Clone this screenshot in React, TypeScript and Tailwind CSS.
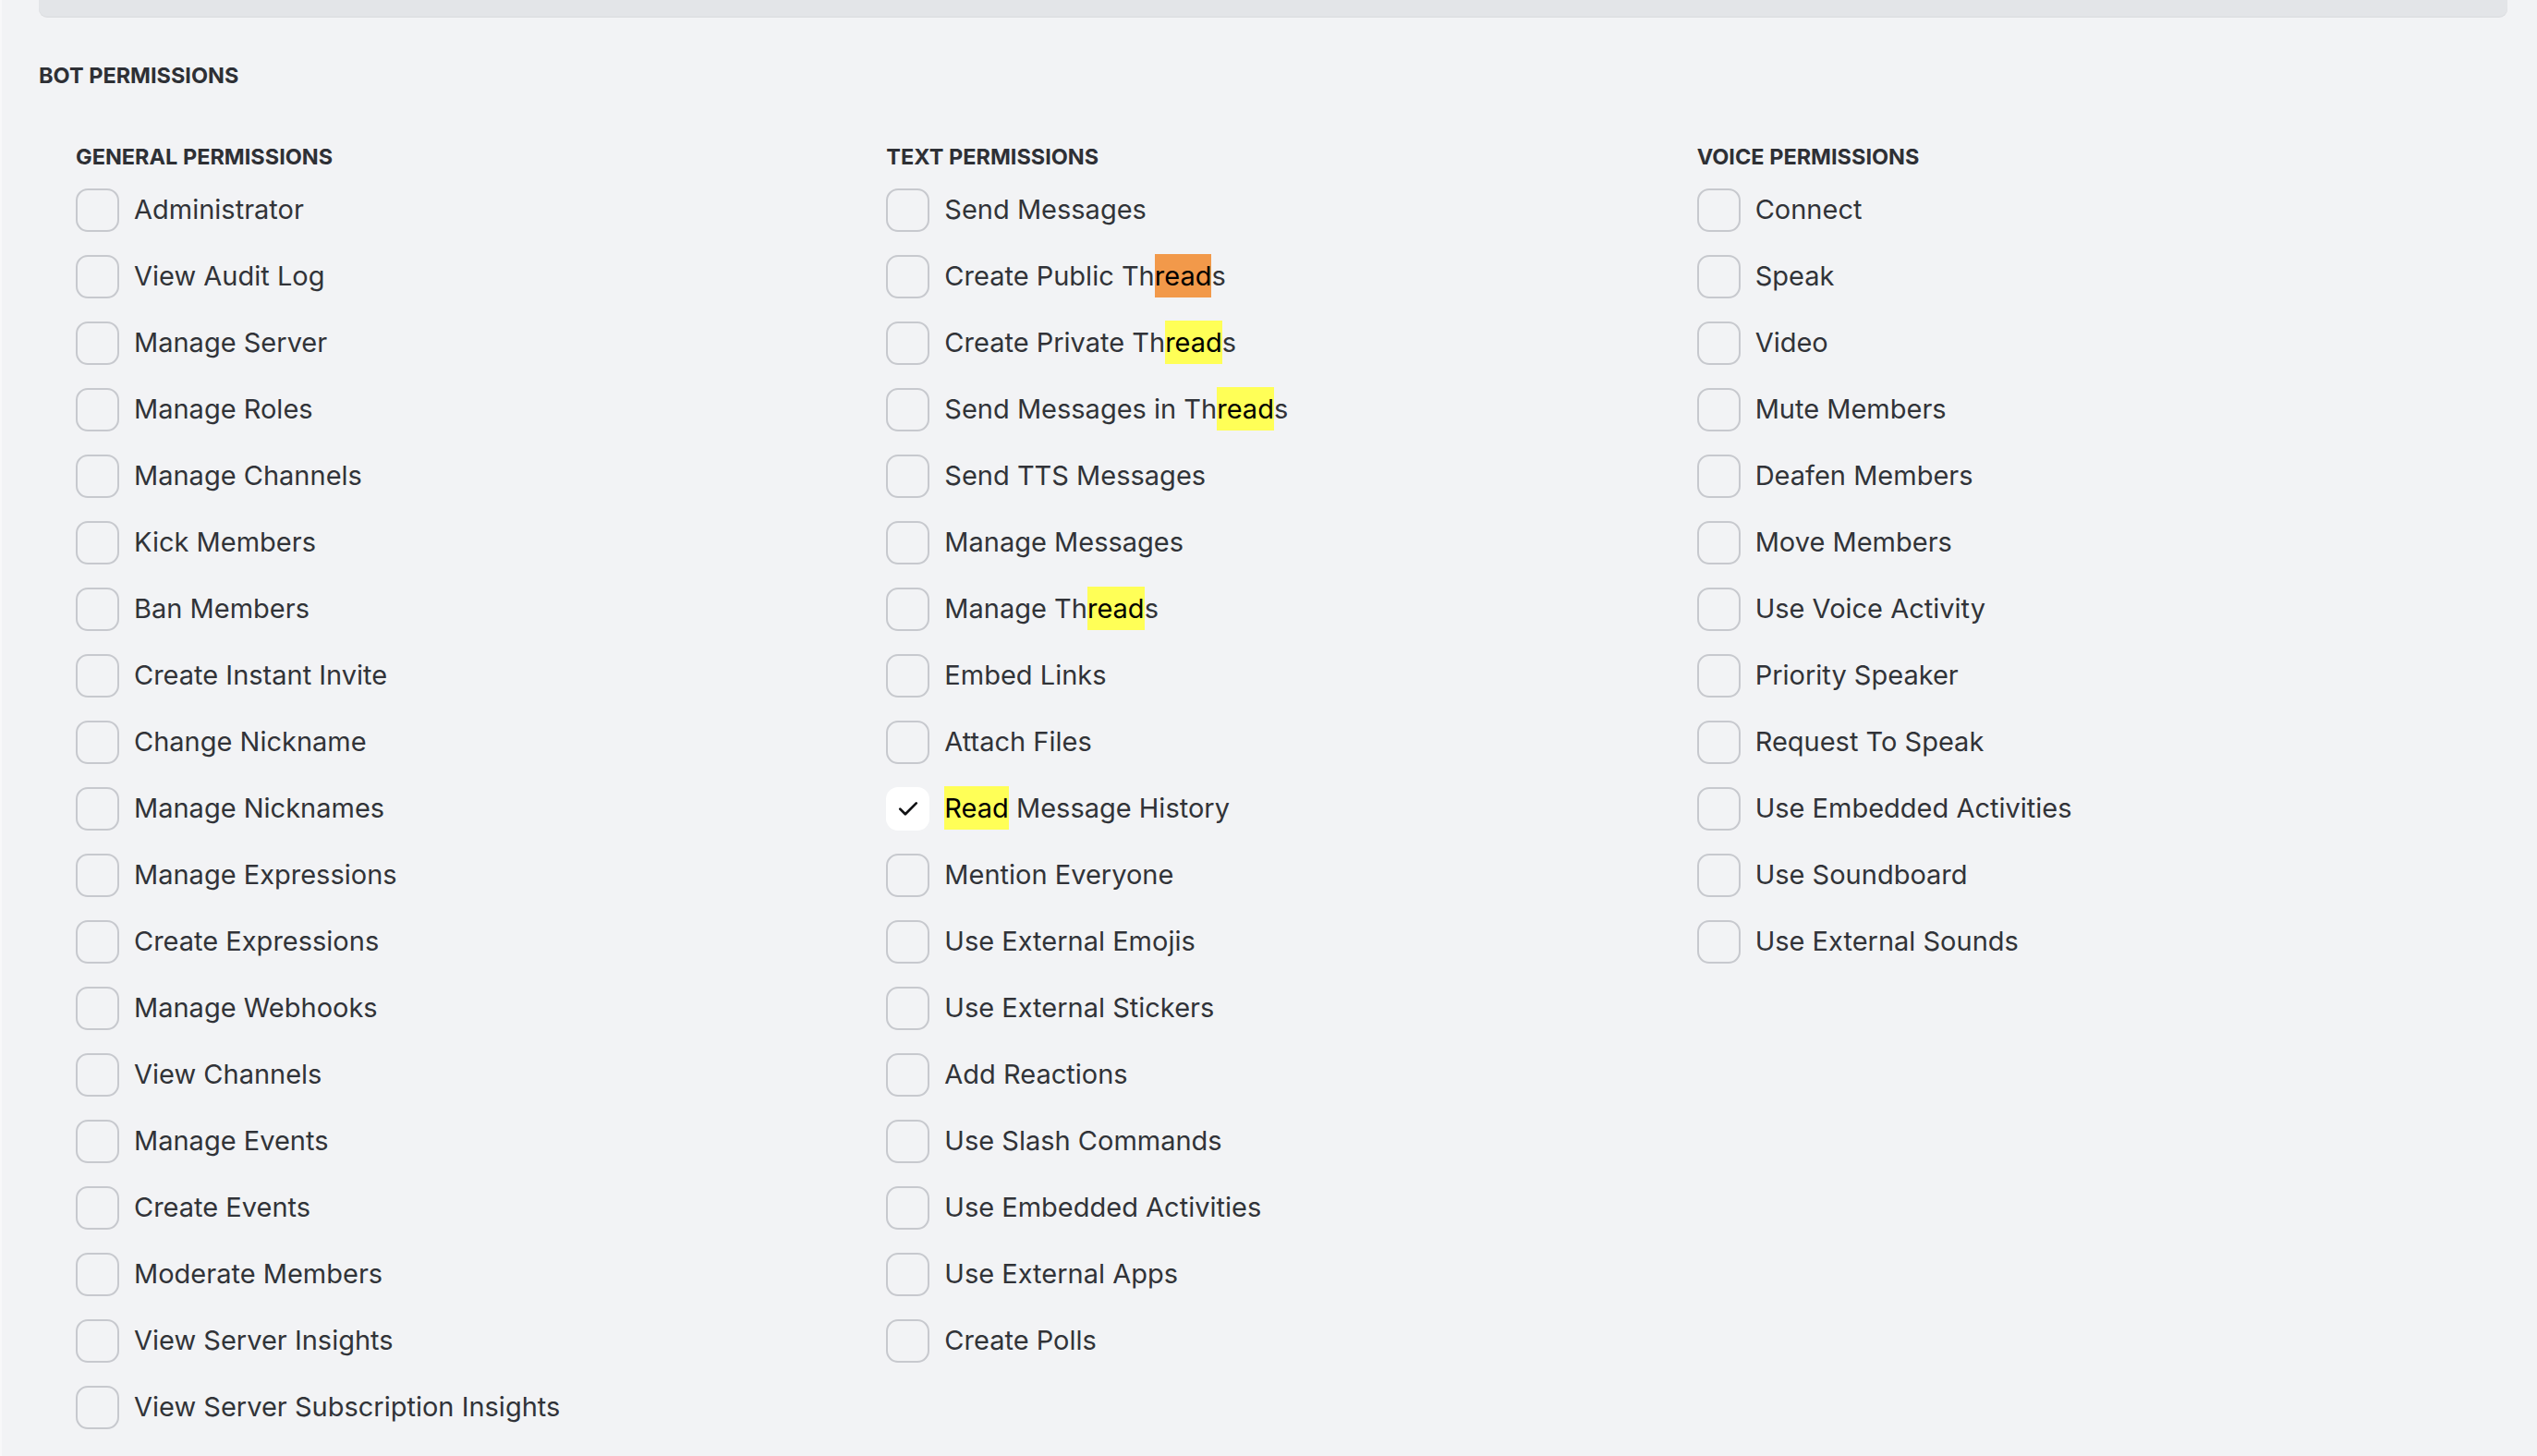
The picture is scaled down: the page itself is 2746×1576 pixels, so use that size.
import React from "react";

type Item = { label: React.ReactNode; checked?: boolean };

const HL = ({ children, active }: { children: React.ReactNode; active?: boolean }) => (
  <span className={active ? "bg-[#f2994a] text-black py-[6px]" : "bg-[#ffff57] text-black py-[6px]"}>{children}</span>
);

const general: Item[] = [
  "Administrator",
  "View Audit Log",
  "Manage Server",
  "Manage Roles",
  "Manage Channels",
  "Kick Members",
  "Ban Members",
  "Create Instant Invite",
  "Change Nickname",
  "Manage Nicknames",
  "Manage Expressions",
  "Create Expressions",
  "Manage Webhooks",
  "View Channels",
  "Manage Events",
  "Create Events",
  "Moderate Members",
  "View Server Insights",
  "View Server Subscription Insights",
].map((l) => ({ label: l }));

const text: Item[] = [
  { label: "Send Messages" },
  { label: <>Create Public Th<HL active>read</HL>s</> },
  { label: <>Create Private Th<HL>read</HL>s</> },
  { label: <>Send Messages in Th<HL>read</HL>s</> },
  { label: "Send TTS Messages" },
  { label: "Manage Messages" },
  { label: <>Manage Th<HL>read</HL>s</> },
  { label: "Embed Links" },
  { label: "Attach Files" },
  { label: <><HL>Read</HL> Message History</>, checked: true },
  { label: "Mention Everyone" },
  { label: "Use External Emojis" },
  { label: "Use External Stickers" },
  { label: "Add Reactions" },
  { label: "Use Slash Commands" },
  { label: "Use Embedded Activities" },
  { label: "Use External Apps" },
  { label: "Create Polls" },
];

const voice: Item[] = [
  "Connect",
  "Speak",
  "Video",
  "Mute Members",
  "Deafen Members",
  "Move Members",
  "Use Voice Activity",
  "Priority Speaker",
  "Request To Speak",
  "Use Embedded Activities",
  "Use Soundboard",
  "Use External Sounds",
].map((l) => ({ label: l }));

function Checkbox({ checked }: { checked?: boolean }) {
  if (checked) {
    return (
      <div className="w-[47px] h-[47px] rounded-[13px] bg-white flex items-center justify-center shrink-0">
        <svg width="30" height="30" viewBox="0 0 24 24" fill="none">
          <path d="M5 12.5l4.5 4.5L19 7.5" stroke="#111214" strokeWidth="2.2" strokeLinecap="round" strokeLinejoin="round" />
        </svg>
      </div>
    );
  }
  return <div className="w-[47px] h-[47px] rounded-[13px] border-2 border-[#c7c9ce] shrink-0" />;
}

function Column({ title, items }: { title: string; items: Item[] }) {
  return (
    <div className="flex flex-col">
      <div className="h-[28px] leading-[28px] text-[23.5px] font-bold text-[#2e3035] uppercase mb-[7px]">{title}</div>
      {items.map((it, i) => (
        <div key={i} className="h-[72px] flex items-center gap-[16px]">
          <Checkbox checked={it.checked} />
          <span className="text-[29px] leading-[36px] text-[#313338] whitespace-nowrap">{it.label}</span>
        </div>
      ))}
    </div>
  );
}

export default function App() {
  return (
    <div
      className="min-h-screen w-full bg-[#f2f3f5] border-l-2 border-[#f8f8f9] pl-[40px] pr-[32px] overflow-hidden"
      style={{ fontFamily: "Inter, 'Noto Sans', sans-serif" }}
    >
      <div className="h-[18px] bg-[#e3e5e8] rounded-b-[9px] shadow-[0_1px_0_#d9dbde]" />
      <div className="mt-[50px] h-[28px] leading-[28px] text-[23.5px] font-bold text-[#2e3035] uppercase">
        Bot Permissions
      </div>
      <div className="mt-[60px] ml-[40px] grid grid-cols-3 pb-[20px]">
        <Column title="General Permissions" items={general} />
        <Column title="Text Permissions" items={text} />
        <Column title="Voice Permissions" items={voice} />
      </div>
    </div>
  );
}
